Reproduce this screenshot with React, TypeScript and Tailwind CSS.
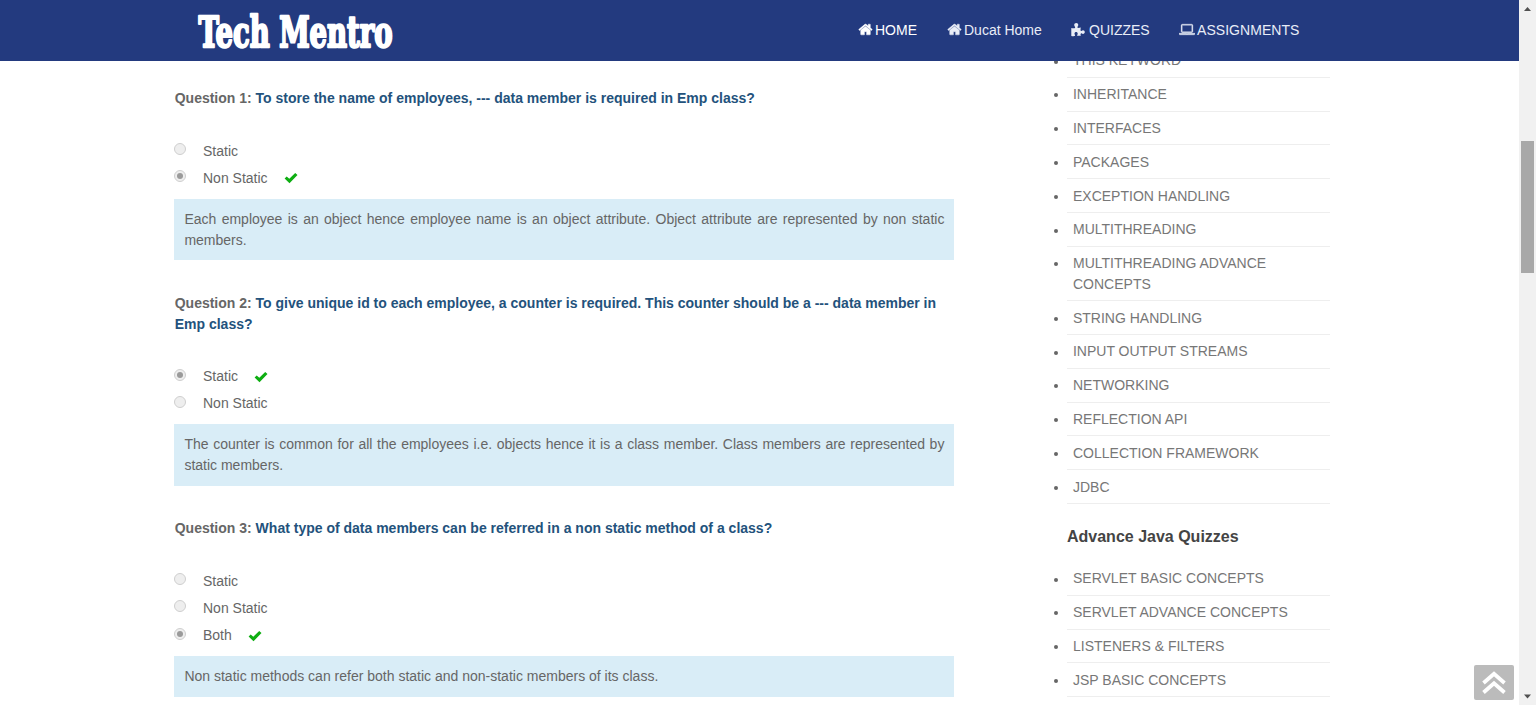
import React from "react";

const coreTopics = [
  "THIS KEYWORD",
  "INHERITANCE",
  "INTERFACES",
  "PACKAGES",
  "EXCEPTION HANDLING",
  "MULTITHREADING",
  "MULTITHREADING ADVANCE CONCEPTS",
  "STRING HANDLING",
  "INPUT OUTPUT STREAMS",
  "NETWORKING",
  "REFLECTION API",
  "COLLECTION FRAMEWORK",
  "JDBC",
];

const advanceTopics = [
  "SERVLET BASIC CONCEPTS",
  "SERVLET ADVANCE CONCEPTS",
  "LISTENERS & FILTERS",
  "JSP BASIC CONCEPTS",
];

type Question = {
  title: string;
  options: string[];
  answer: number;
  note: string;
};

const questions: Question[] = [
  {
    title: "To store the name of employees, --- data member is required in Emp class?",
    options: ["Static", "Non Static"],
    answer: 1,
    note: "Each employee is an object hence employee name is an object attribute. Object attribute are represented by non static members.",
  },
  {
    title:
      "To give unique id to each employee, a counter is required. This counter should be a --- data member in Emp class?",
    options: ["Static", "Non Static"],
    answer: 0,
    note: "The counter is common for all the employees i.e. objects hence it is a class member. Class members are represented by static members.",
  },
  {
    title: "What type of data members can be referred in a non static method of a class?",
    options: ["Static", "Non Static", "Both"],
    answer: 2,
    note: "Non static methods can refer both static and non-static members of its class.",
  },
];

function HomeIcon() {
  return (
    <svg viewBox="0 0 1792 1792" className="h-[15px] w-[15px]" fill="currentColor" stroke="currentColor" strokeWidth="50">
      <path d="M1472 992v480q0 26-19 45t-45 19h-384v-384h-256v384h-384q-26 0-45-19t-19-45v-480q0-1 .5-3t.5-3l575-474 575 474q1 2 1 6zm223-69l-62 74q-8 9-21 11h-3q-13 0-21-7l-692-577-692 577q-12 8-24 7-13-2-21-11l-62-74q-8-10-7-23.5t11-21.5l719-599q32-26 76-26t76 26l244 204v-195q0-14 9-23t23-9h192q14 0 23 9t9 23v408l219 182q10 8 11 21.5t-7 23.5z" />
    </svg>
  );
}

function PuzzleIcon() {
  return (
    <svg viewBox="0 0 14 14" className="h-[14px] w-[14px]" fill="currentColor">
      <path d="M0.3 4.9C1.6 5.2 3 5.2 4.1 4.9C4.5 4.1 3.2 3.4 3.2 2.1C3.2 0.8 4.1 0.1 5.3 0.1C6.4 0.1 7.3 0.8 7.3 2.1C7.3 3.4 6 4.1 6.5 4.8C7.4 5.1 8.6 4.9 9.8 4.6C9.5 6.1 9.4 7.2 9.8 7.9C10.4 8.4 10.9 7.2 12 7.2C13.1 7.2 13.8 8 13.8 9.1C13.8 10.2 13.1 11 12 11C10.9 11 10.5 10 9.9 10.4C9.4 10.9 9.5 12 9.8 12.9C8.6 12.8 7.5 12.8 6.5 13C5.8 12.3 6.7 11.6 6.7 10.5C6.7 9.6 6 9 5.1 9C4.2 9 3.5 9.6 3.5 10.5C3.5 11.7 4.5 12.4 3.8 13.1C2.7 13.2 1.4 13.2 0.3 12.9Z" />
    </svg>
  );
}

function LaptopIcon() {
  return (
    <svg viewBox="0 0 1920 1792" className="h-[15px] w-[16px]" fill="currentColor" stroke="currentColor" strokeWidth="40">
      <path d="M416 1280q-66 0-113-47t-47-113v-704q0-66 47-113t113-47h1088q66 0 113 47t47 113v704q0 66-47 113t-113 47h-1088zm-32-864v704q0 13 9.5 22.5t22.5 9.5h1088q13 0 22.5-9.5t9.5-22.5v-704q0-13-9.5-22.5t-22.5-9.5h-1088q-13 0-22.5 9.5t-9.5 22.5zm1376 928h160v96q0 40-47 68t-113 28h-1600q-66 0-113-28t-47-68v-96h1760zm-720 96q16 0 16-16t-16-16h-160q-16 0-16 16t16 16h160z" />
    </svg>
  );
}

function Navbar() {
  return (
    <header className="flex h-[61px] shrink-0 bg-[#233a7f] pl-[192px] text-[14px] text-[#e9edf7]">
      <svg className="h-[61px] w-[210px] shrink-0" viewBox="0 0 210 61">
        <text
          x="6.5"
          y="46.5"
          textLength="194"
          lengthAdjust="spacingAndGlyphs"
          fontFamily="'DejaVu Serif Condensed', 'DejaVu Serif', serif"
          fontWeight="700"
          fontSize="43.5"
          fill="#fff"
          stroke="#fff"
          strokeWidth="2.4"
          strokeLinejoin="round"
        >
          Tech Mentro
        </text>
      </svg>
      <nav className="flex h-[60px] items-center pl-[456px]">
        <a className="flex w-[89px] items-center gap-[2px] whitespace-nowrap text-white">
          <HomeIcon />
          HOME
        </a>
        <a className="flex w-[124px] items-center gap-[2px] whitespace-nowrap">
          <HomeIcon />
          Ducat Home
        </a>
        <a className="flex w-[108px] items-center gap-[4px] whitespace-nowrap">
          <PuzzleIcon />
          QUIZZES
        </a>
        <a className="flex items-center gap-[2px] whitespace-nowrap tracking-[0.05px]">
          <LaptopIcon />
          ASSIGNMENTS
        </a>
      </nav>
    </header>
  );
}

function Radio({ checked }: { checked: boolean }) {
  return (
    <span className="mb-[4px] flex h-[12px] w-[12px] items-center justify-center rounded-full border border-[#cfcfcf] bg-[#eeeeee]">
      {checked && <span className="h-[6px] w-[6px] rounded-full bg-[#9a9a9a]" />}
    </span>
  );
}

function QuestionBlock({ index, q }: { index: number; q: Question }) {
  return (
    <section className="mb-[32.4px]">
      <h2 className="pl-[0.3px] font-bold text-[#23527c]">
        <span className="text-[#666]">Question {index}:</span> {q.title}
      </h2>
      <div className="mt-[28.5px] mb-[7px]">
        {q.options.map((option, i) => (
          <div key={option} className="flex h-[27.2px] items-center">
            <Radio checked={i === q.answer} />
            <span className="ml-[16.6px]">{option}</span>
            {i === q.answer && (
              <svg viewBox="0 0 14 12" className="ml-[16px] h-[12px] w-[14px]" fill="#0eae12">
                <path d="M0.6 6.5L2.7 4.4L5.3 6.7L11.2 1L13.5 3.1L5.5 11.2Z" />
              </svg>
            )}
          </div>
        ))}
      </div>
      <p className="bg-[#d9edf7] p-[10px] text-justify">{q.note}</p>
    </section>
  );
}

function TopicList({ items }: { items: string[] }) {
  return (
    <ul>
      {items.map((item) => (
        <li key={item} className="flex">
          <span className="mt-[15.6px] mr-[9px] h-[4px] w-[4px] shrink-0 rounded-full bg-[#666]" />
          <a className="w-[263px] border-b border-[#eeeeee] px-[6px] pt-[6.4px] pb-[5.6px] text-[#777]">
            {item}
          </a>
        </li>
      ))}
    </ul>
  );
}

function Scrollbar() {
  return (
    <div className="flex w-[17px] shrink-0 flex-col items-center bg-[#f1f1f1]">
      <svg className="h-[17px] w-[17px]" viewBox="0 0 17 17" fill="#505050">
        <path d="M5 11L8.5 7L12 11Z" />
      </svg>
      <div className="mt-[124px] h-[132px] w-[13px] bg-[#a8a8a8]" />
      <svg className="mt-auto h-[17px] w-[17px]" viewBox="0 0 17 17" fill="#505050">
        <path d="M5 6.5L8.5 10.5L12 6.5Z" />
      </svg>
    </div>
  );
}

export default function App() {
  return (
    <div className="flex h-[705px] w-[1536px] overflow-hidden bg-white font-['Liberation_Sans',Arial,sans-serif] text-[14px] leading-[20.8px] text-[#666]">
      <div className="relative flex w-[1519px] shrink-0 flex-col overflow-hidden">
        <Navbar />
        <div className="flex min-h-0 flex-1 items-start overflow-hidden pl-[174.4px]">
          <main className="w-[780px] shrink-0 pt-[27.2px]">
            {questions.map((q, i) => (
              <QuestionBlock key={q.title} index={i + 1} q={q} />
            ))}
          </main>
          <aside className="-mt-[17px] ml-[99.6px]">
            <TopicList items={coreTopics} />
            <h3 className="mt-[22.6px] mb-[14.6px] ml-[13px] text-[16px] font-bold text-[#444]">
              Advance Java Quizzes
            </h3>
            <TopicList items={advanceTopics} />
          </aside>
        </div>
        <button className="absolute right-[5px] bottom-[5px] flex h-[35px] w-[40px] items-center justify-center rounded-[2px] bg-[#bbbbbb]">
          <svg
            className="h-[24px] w-[24px]"
            viewBox="0 0 24 24"
            fill="none"
            stroke="#fff"
            strokeWidth="3.8"
          >
            <path d="M1.5 12L12 2.8L22.5 12M1.5 21.5L12 12.3L22.5 21.5" />
          </svg>
        </button>
      </div>
      <Scrollbar />
    </div>
  );
}
